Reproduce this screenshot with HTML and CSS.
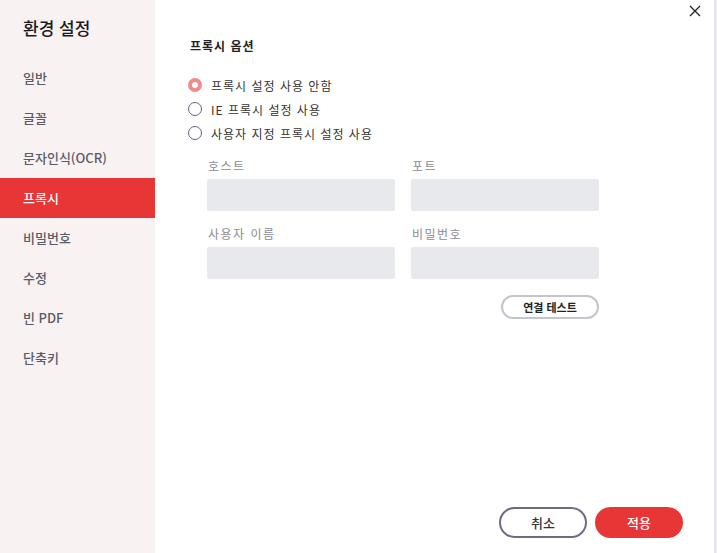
FILE: index.html
```html
<!DOCTYPE html>
<html lang="ko">
<head>
<meta charset="utf-8">
<link rel="stylesheet" href="styles.css">
</head>
<body>
<div class="dialog">
  <aside class="sidebar">
    <h1 class="title">환경 설정</h1>
    <nav class="menu">
      <div class="item">일반</div>
      <div class="item">글꼴</div>
      <div class="item">문자인식(OCR)</div>
      <div class="item active">프록시</div>
      <div class="item">비밀번호</div>
      <div class="item">수정</div>
      <div class="item">빈 PDF</div>
      <div class="item">단축키</div>
    </nav>
  </aside>
  <main class="content">
    <button class="close" aria-label="닫기">
      <svg width="12" height="12" viewBox="0 0 12 12"><path d="M1 1L11 11M11 1L1 11" stroke="#222" stroke-width="1.3" fill="none"/></svg>
    </button>
    <h2 class="section">프록시 옵션</h2>
    <div class="radios">
      <label class="radio"><span class="dot checked"></span>프록시 설정 사용 안함</label>
      <label class="radio"><span class="dot"></span>IE 프록시 설정 사용</label>
      <label class="radio"><span class="dot"></span>사용자 지정 프록시 설정 사용</label>
    </div>
    <div class="fields">
      <div class="field"><div class="label">호스트</div><div class="input"></div></div>
      <div class="field"><div class="label">포트</div><div class="input"></div></div>
      <div class="field"><div class="label">사용자 이름</div><div class="input"></div></div>
      <div class="field"><div class="label">비밀번호</div><div class="input"></div></div>
    </div>
    <div class="test-row"><button class="test">연결 테스트</button></div>
    <div class="spacer"></div>
    <div class="actions">
      <button class="btn cancel">취소</button>
      <button class="btn apply">적용</button>
    </div>
  </main>
  <div class="edge"></div>
</div>
</body>
</html>
```
FILE: styles.css
```css
* { box-sizing: border-box; }
html, body { margin: 0; padding: 0; }
body {
  width: 717px;
  height: 553px;
  overflow: hidden;
  font-family: "Noto Sans CJK KR", "Noto Sans", sans-serif;
  background: #fff;
}
.dialog {
  display: flex;
  width: 717px;
  height: 553px;
}
.sidebar {
  width: 155px;
  flex: none;
  background: #f8f2f2;
}
.title {
  margin: 0;
  padding: 15px 0 0 23px;
  height: 58px;
  font-size: 17px;
  font-weight: 500;
  color: #1a1a1a;
  line-height: 26px;
}
.menu { display: flex; flex-direction: column; }
.item {
  height: 40px;
  line-height: 40px;
  padding-left: 23px;
  font-size: 13px;
  font-weight: 500;
  color: #5b5b66;
}
.item.active {
  background: #e83535;
  color: #fff;
}
.content {
  position: relative;
  flex: 1;
  display: flex;
  flex-direction: column;
  padding: 36px 0 0 33px;
}
.close {
  position: absolute;
  top: 4px;
  right: 12px;
  width: 14px;
  height: 14px;
  padding: 0;
  border: 0;
  background: none;
  display: flex;
  align-items: center;
  justify-content: center;
}
.section {
  margin: 0 0 0 2px;
  font-size: 12px;
  font-weight: 700;
  color: #222;
  line-height: 20px;
  letter-spacing: 1px;
}
.radios {
  display: flex;
  flex-direction: column;
  gap: 6px;
  margin-top: 20px;
}
.radio {
  display: flex;
  align-items: center;
  height: 18px;
  font-size: 12px;
  color: #333;
  letter-spacing: 1px;
}
.dot {
  width: 14px;
  height: 14px;
  border: 1.5px solid #5f6278;
  border-radius: 50%;
  margin-right: 9px;
  flex: none;
}
.dot.checked {
  border: 4px solid #f08b8b;
  background: #fff;
}
.fields {
  display: grid;
  grid-template-columns: 188px 188px;
  column-gap: 16px;
  row-gap: 12px;
  margin-top: 13px;
  margin-left: 19px;
}
.label {
  font-size: 12px;
  color: #8a8a94;
  line-height: 22px;
  height: 24px;
  padding-left: 1px;
  letter-spacing: 1.5px;
}
.input {
  height: 32px;
  background: #e8e9ec;
  border-radius: 2px;
}
.test-row {
  display: flex;
  justify-content: flex-end;
  width: 411px;
  margin-top: 16px;
}
.test {
  width: 98px;
  height: 24px;
  border: 2px solid #c3c4cc;
  border-radius: 12px;
  background: #fff;
  font-family: inherit;
  font-size: 11px;
  font-weight: 700;
  color: #222;
  padding: 0;
}
.spacer { flex: 1; }
.actions {
  display: flex;
  gap: 8px;
  padding-left: 311px;
  margin-bottom: 15px;
}
.btn {
  width: 88px;
  height: 31px;
  border-radius: 16px;
  font-family: inherit;
  font-size: 13px;
  font-weight: 500;
  padding: 0;
}
.cancel {
  border: 2px solid #6b6e80;
  background: #fff;
  color: #333;
}
.apply {
  border: 0;
  background: #e83535;
  color: #fff;
}
.edge {
  width: 3px;
  flex: none;
  background: #e9e7ee;
}
```
